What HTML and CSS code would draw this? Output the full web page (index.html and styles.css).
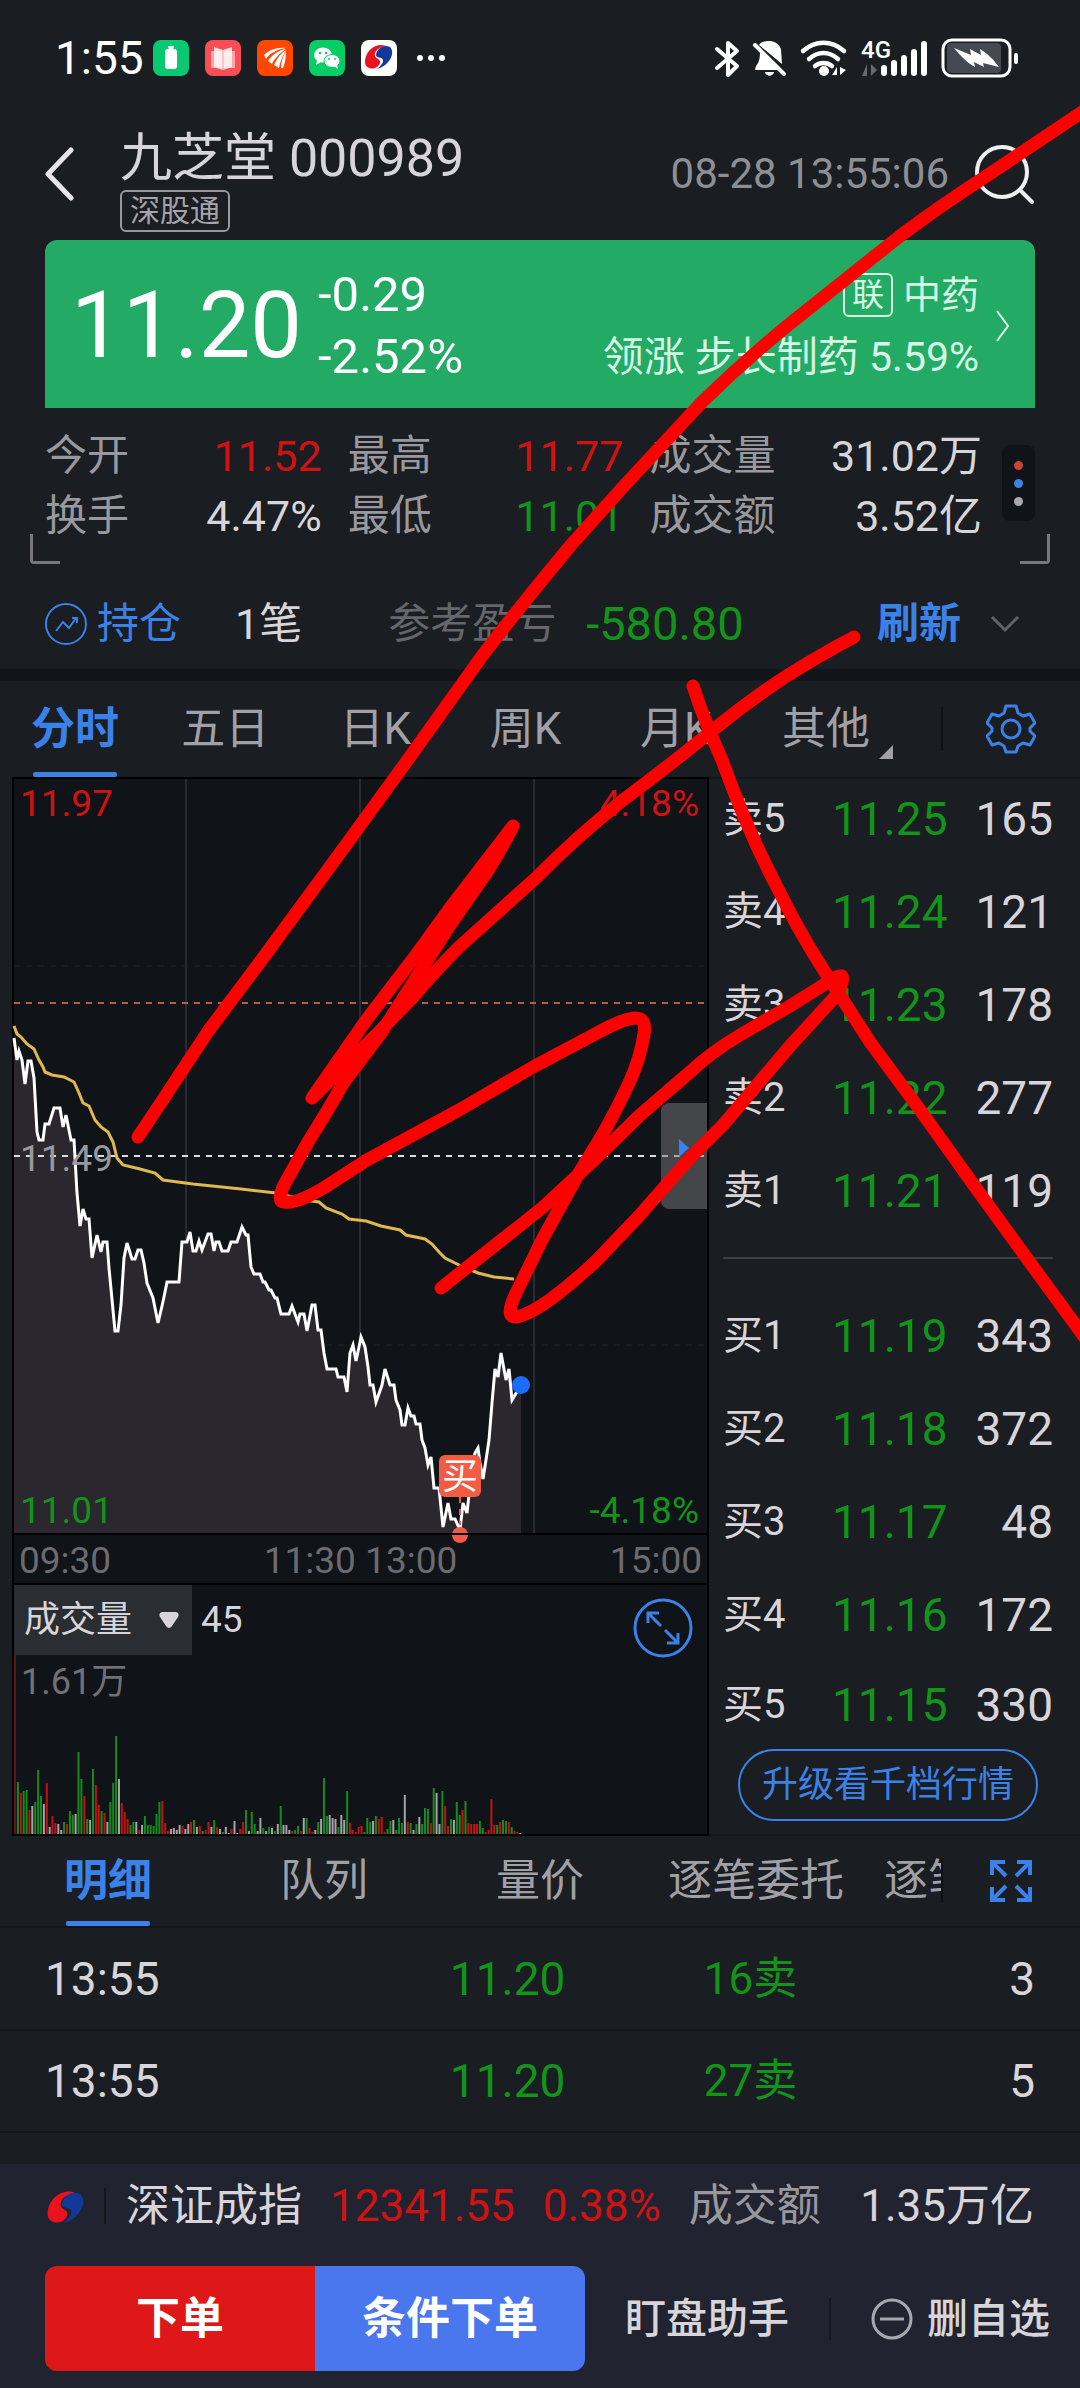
FILE: index.html
```html
<!DOCTYPE html>
<html lang="zh-CN">
<head>
<meta charset="utf-8">
<meta name="viewport" content="width=device-width, initial-scale=1">
<title>九芝堂 000989</title>
<link rel="stylesheet" href="styles.css">
</head>
<body>
<div class="app">
  <div class="status">
    <span class="clock">1:55</span>
    <div class="notices">
      <svg width="36" height="36" viewBox="0 0 36 36"><rect width="36" height="36" rx="8" fill="#08c972"/><rect x="12" y="9" width="12" height="20" rx="3" fill="#fff"/><path d="M15 6h6l-1 4h-4z" fill="#fff"/></svg>
      <svg width="36" height="36" viewBox="0 0 36 36"><rect width="36" height="36" rx="8" fill="#f94f54"/><path d="M6 11h24v17H6z" fill="#fda5a8"/><path d="M9 7l9 3 9-3v20l-9 3-9-3z" fill="#fff" opacity=".8"/><path d="M18 10v20" stroke="#f9a0a3"/></svg>
      <svg width="36" height="36" viewBox="0 0 36 36"><rect width="36" height="36" rx="8" fill="#ff4700"/><path d="M7 15C12 10 20 7 29 8 18 10 12 14 9 19zM11 21c4-6 10-11 18-12-7 5-11 9-14 15zM17 25c3-7 7-12 12-15-4 7-6 12-7 18zM24 28c0-6 2-12 5-17 0 7-1 12-3 17z" fill="#fff"/></svg>
      <svg width="36" height="36" viewBox="0 0 36 36"><rect width="36" height="36" rx="8" fill="#07cd65"/><ellipse cx="14" cy="15" rx="9" ry="7.500" fill="#fff"/><path d="M8 20l-1 5 5-3z" fill="#fff"/><ellipse cx="23" cy="21" rx="8" ry="6.500" fill="#fff" stroke="#07cd65"/><path d="M25 26l4 3-1-5z" fill="#fff"/><g fill="#07cd65"><circle cx="11" cy="13" r="1.200"/><circle cx="17" cy="13" r="1.200"/><circle cx="20" cy="19" r="1"/><circle cx="26" cy="19" r="1"/></g></svg>
      <svg width="36" height="36" viewBox="0 0 36 36"><rect width="36" height="36" rx="8" fill="#fff"/><use href="#citic"/></svg>
    </div>
    <span class="more"><i></i><i></i><i></i></span>
    <svg class="radios" width="306" height="44" viewBox="0 0 306 44" fill="none">
      <path d="M4 13l20 17-9 9V7l9 8L4 32" stroke="#fff" stroke-width="4" stroke-linejoin="round" stroke-linecap="round"/>
      <path d="M46 9c4-6 19-6 22 4l1 15zM43 30c4-4 4-11 4-15l18 19H42zM52 36h9c-1 5-8 5-9 0z" fill="#fff"/><path d="M42 9l29 29" stroke="#fff" stroke-width="4" stroke-linecap="round"/>
      <g stroke="#fff" stroke-width="4.500" stroke-linecap="round"><path d="M90 15c12-11 29-11 41 0M96 23c9-8 20-8 29 0M102 30c5-4 12-4 17 0"/></g><circle cx="111" cy="35" r="5" fill="#fff"/><path d="M124 31v8h-5zM127 31v8l6-5z" fill="#fff"/>
      <path d="M154 28v12h-5zM158 28v12l6-6z" fill="#666b70"/>
      <g stroke="#fff" stroke-width="6" stroke-linecap="round"><path d="M171 32v5M181 27v10M191 22v15M201 16v21M211 8v29"/></g>
      <rect x="230" y="4" width="67" height="36" rx="9" stroke="#fff" stroke-width="3"/><rect x="234" y="7" width="54" height="30" rx="4" fill="#454a52"/><path d="M241 12l17 7-1-6 11 6-1-6c8 5 13 10 19 18l-16-4 1 4-10-5 1 5c-9-5-15-12-21-19z" fill="#fff"/><rect x="301" y="17" width="4" height="11" rx="2" fill="#fff"/>
      <text x="148" y="22" class="network">4G</text>
    </svg>
  </div>

  <header class="header">
    <button class="icon-btn" aria-label="返回"><svg width="30" height="56" viewBox="0 0 30 56"><path d="M27 4L4 28l23 24" fill="none" stroke="#e8e5ea" stroke-width="5" stroke-linecap="round" stroke-linejoin="round"/></svg></button>
    <div class="title">
      <h1>九芝堂 000989</h1>
      <span class="badge">深股通</span>
    </div>
    <time class="stamp">08-28 13:55:06</time>
    <button class="icon-btn" aria-label="搜索"><svg width="62" height="62" viewBox="0 0 62 62" fill="none" stroke="#f0f0f2" stroke-width="4" stroke-linecap="round"><circle cx="29" cy="29" r="25"/><path d="M47 47l12 12"/></svg></button>
  </header>

  <section class="quote">
    <strong class="price">11.20</strong>
    <div class="change"><span>-0.29</span><span>-2.52%</span></div>
    <a class="sector" href="#sector">
      <span class="sector-name"><b>联</b>中药</span>
      <span>领涨 步长制药 5.59%</span>
    </a>
    <svg width="16" height="34" viewBox="0 0 16 34"><path d="M2 2l11 15L2 32" fill="none" stroke="#e4f8ec" stroke-width="2"/></svg>
  </section>

  <section class="stats">
    <dl>
      <div><dt>今开</dt><dd class="up">11.52</dd></div>
      <div><dt>最高</dt><dd class="up">11.77</dd></div>
      <div><dt>成交量</dt><dd>31.02万</dd></div>
      <div><dt>换手</dt><dd>4.47%</dd></div>
      <div><dt>最低</dt><dd class="down">11.01</dd></div>
      <div><dt>成交额</dt><dd>3.52亿</dd></div>
    </dl>
    <button class="dots" aria-label="更多指标"><i></i><i></i><i></i></button>
  </section>

  <section class="holding">
    <svg width="42" height="42" viewBox="0 0 42 42" fill="none" stroke="#3a82e8" stroke-width="2"><circle cx="21" cy="21" r="20"/><path d="M11 28l7-9 6 6 7-10M27 15h5v5" stroke-width="2"/></svg>
    <span class="hold-name">持仓</span>
    <span class="hold-count">1笔</span>
    <span class="hold-label">参考盈亏</span>
    <span class="hold-value">-580.80</span>
    <button class="refresh">刷新</button>
    <button class="icon-btn" aria-label="展开"><svg width="30" height="18" viewBox="0 0 30 18"><path d="M2 2l13 13L28 2" fill="none" stroke="#606468" stroke-width="3"/></svg></button>
  </section>

  <nav class="tabs">
    <div class="tab-list">
      <button class="tab active">分时</button>
      <button class="tab">五日</button>
      <button class="tab">日K</button>
      <button class="tab">周K</button>
      <button class="tab">月K</button>
      <button class="tab other">其他</button>
    </div>
    <button class="tool" aria-label="设置"><svg width="50" height="50" viewBox="0 0 50 50" fill="none" stroke="#3a82e8" stroke-width="3" stroke-linejoin="round"><path d="M20 2h10l2 7 5 3 7-2 5 9-5 5v3l5 5-5 9-7-2-5 3-2 6H20l-2-6-5-3-7 2-5-9 5-5v-3l-5-5 5-9 7 2 5-3z"/><circle cx="25" cy="25" r="9"/></svg></button>
  </nav>

  <main class="market">
    <div class="charts">
      <div class="chart">
        <svg class="plot" viewBox="0 0 693 754" fill="none">
          <path d="M172 0v754M346 0v754M520 0v754" stroke="#292c33" stroke-width="2"/>
          <path d="M0 187h693M0 566h693" stroke="#20262a" stroke-dasharray="6 6"/>
          <path class="area" fill="#2a272f" d=""/>
          <path d="M0 224h693" stroke="#b85b4c" stroke-width="2" stroke-dasharray="6 6"/>
          <path d="M0 377h693" stroke="#dcdcdc" stroke-width="2" stroke-dasharray="6 6"/>
          <polyline points="0,247 3,255 7,258 13,265 20,270 25,281 29,288 31,293 38,296 50,298 60,303 65,314 69,324 75,327 81,341 87,348 94,353 99,363 103,379 109,386 126,390 141,394 149,401 179,405 227,410 262,414 291,421 305,423 312,429 328,435 335,440 352,442 367,447 386,451 392,456 411,460 418,465 425,473 431,479 447,487 464,494 480,498 500,500" stroke="#dfb850" stroke-width="3"/>
          <polyline class="line" stroke="#fff" stroke-width="3" points="0,259 3,281 5,272 8,281 11,305 14,282 17,282 20,299 23,353 25,361 29,361 31,345 35,345 40,329 46,329 49,348 52,336 54,346 57,361 60,361 63,414 66,447 69,430 72,440 75,440 78,479 83,456 87,473 89,463 93,463 95,489 101,552 104,552 107,526 110,479 113,464 118,480 121,480 124,471 127,471 130,484 133,504 139,519 144,544 148,527 150,518 153,503 165,503 168,463 173,463 176,453 179,472 182,472 185,462 188,471 194,455 197,455 200,472 202,463 205,463 208,472 214,472 217,463 223,463 228,448 232,456 234,456 237,488 240,495 246,495 249,503 251,503 255,511 257,511 261,519 263,519 267,535 275,535 278,527 284,543 286,535 290,535 293,552 298,526 301,526 304,551 307,551 310,574 313,590 322,590 324,598 330,598 333,613 336,574 339,566 342,582 345,568 347,558 351,568 354,588 356,606 359,606 362,623 368,606 371,590 376,606 380,606 382,621 386,631 388,646 391,646 394,629 397,637 400,637 402,645 406,645 408,661 411,669 414,686 417,678 420,709 425,709 429,748 434,724 437,740 441,740 446,751 449,724 453,734 458,688 461,674 464,669 466,684 469,700 472,681 475,661 478,624 481,590 484,598 487,574 492,601 495,590 498,621 507,606"/>
          <circle cx="507" cy="606" r="9" fill="#1a6dff"/>
          <path d="M446 718v28" stroke="#ef5b48" stroke-width="2" stroke-dasharray="6 6"/>
          <circle cx="446" cy="756" r="8" fill="#ef5b48"/>
          <path d="M436 755h20" stroke="#000" stroke-width="2"/>
          <rect x="425" y="676" width="42" height="42" rx="6" fill="#f45b45"/>
          <text x="446" y="710" class="buy-mark">买</text>
        </svg>
        <span class="tag top left up">11.97</span>
        <span class="tag top right up">4.18%</span>
        <span class="tag mid left">11.49</span>
        <span class="tag bottom left down">11.01</span>
        <span class="tag bottom right down">-4.18%</span>
        <button class="handle" aria-label="收起盘口"><svg width="10" height="18" viewBox="0 0 10 18"><path d="M0 0l10 9-10 9z" fill="#3a82f0"/></svg></button>
      </div>
      <div class="times"><span>09:30</span><span>11:30 13:00</span><span>15:00</span></div>
      <div class="volume">
        <div class="volume-head">
          <label class="picker"><select aria-label="指标"><option>成交量</option></select><svg width="20" height="16" viewBox="0 0 20 16"><path d="M3 0h14q4 1 2 5l-6 9q-3 4-6 0L1 5q-2-4 2-5z" fill="#d8d5da"/></svg></label>
          <span>45</span>
        </div>
        <span class="volume-max">1.61万</span>
        <svg class="bars" viewBox="0 0 693 249" fill="none" stroke-width="2"></svg>
        <button class="zoom" aria-label="放大"><svg width="60" height="60" viewBox="0 0 60 60" fill="none" stroke="#3a82e8" stroke-width="3"><circle cx="30" cy="30" r="28"/><path d="M15 25V15h11M15 15l13 13M45 35v10H34M45 45L32 32"/></svg></button>
      </div>
    </div>

    <aside class="book">
      <table class="asks">
        <tr><th>卖5</th><td class="down">11.25</td><td>165</td></tr>
        <tr><th>卖4</th><td class="down">11.24</td><td>121</td></tr>
        <tr><th>卖3</th><td class="down">11.23</td><td>178</td></tr>
        <tr><th>卖2</th><td class="down">11.22</td><td>277</td></tr>
        <tr><th>卖1</th><td class="down">11.21</td><td>119</td></tr>
      </table>
      <hr>
      <table class="bids">
        <tr><th>买1</th><td class="down">11.19</td><td>343</td></tr>
        <tr><th>买2</th><td class="down">11.18</td><td>372</td></tr>
        <tr><th>买3</th><td class="down">11.17</td><td>48</td></tr>
        <tr><th>买4</th><td class="down">11.16</td><td>172</td></tr>
        <tr><th>买5</th><td class="down">11.15</td><td>330</td></tr>
      </table>
      <button class="upgrade">升级看千档行情</button>
    </aside>
  </main>

  <nav class="tabs detail-tabs">
    <div class="tab-list">
      <button class="tab active">明细</button>
      <button class="tab">队列</button>
      <button class="tab">量价</button>
      <button class="tab">逐笔委托</button>
      <button class="tab">逐笔</button>
    </div>
    <button class="tool" aria-label="全屏"><svg width="44" height="44" viewBox="0 0 44 44" fill="none" stroke="#3a82e8" stroke-width="4"><path d="M3 16V3h13M3 3l14 14M28 3h13v13M41 3L27 17M3 28v13h13M3 41l14-14M41 28v13H28M41 41L27 27"/></svg></button>
  </nav>

  <table class="trades">
    <tr><td>13:55</td><td class="down">11.20</td><td class="down">16卖</td><td>3</td></tr>
    <tr><td>13:55</td><td class="down">11.20</td><td class="down">27卖</td><td>5</td></tr>
  </table>

  <footer class="footer">
    <div class="index">
      <svg width="42" height="42" viewBox="2 0 32 32"><g id="citic"><path d="M25 6C16 2 4 10 4 22c0 8 12 9 15 1 1-4-4-4-5-7C13 11 18 7 25 6z" fill="#e8131d"/><path d="M15 15c1-7 8-11 14-8 6 6-1 19-13 22 6-5 8-9 4-11-3-1-5-1-5-3z" fill="#12399a"/></g></svg>
      <span class="rule"></span>
      <span class="index-name">深证成指</span>
      <span class="up">12341.55</span>
      <span class="up">0.38%</span>
      <span class="muted">成交额</span>
      <span>1.35万亿</span>
    </div>
    <div class="actions">
      <div class="orders">
        <button class="order">下单</button>
        <button class="order condition">条件下单</button>
      </div>
      <button class="plain">盯盘助手</button>
      <span class="rule"></span>
      <button class="plain"><svg width="42" height="42" viewBox="0 0 42 42" fill="none" stroke="#a8a8ae" stroke-width="3"><circle cx="21" cy="21" r="19"/><path d="M9 21h24"/></svg>删自选</button>
    </div>
  </footer>

  <svg class="ink" viewBox="0 0 1080 2388" fill="none" aria-hidden="true">
    <path d="M138 1137L166 1095Q185 1066 209 1030L260 962L340 853L404 765L482 656Q525 600 571 545L623 487L702 402Q745 360 792 322L900 236Q940 206 985 177L1085 110"/>
    <path d="M854 637Q820 655 785 677Q750 700 713 730Q670 765 623 800Q575 838 537 877L459 947Q438 968 413 997L376 1035L312 1098L367 1019L413 959L450 908L513 826Q500 852 487 872L450 925L418 975L381 1033L344 1082Q325 1115 308 1142L284 1185Q276 1203 285 1202Q297 1204 325 1187L367 1160L459 1110L533 1067L597 1033Q620 1020 634 1018Q647 1017 644 1034Q640 1060 629 1083Q615 1113 601 1137L579 1173L542 1240L520 1285Q502 1319 517 1317Q530 1314 551 1299Q575 1281 597 1260L638 1217L690 1158L723 1125L790 1046L833 999Q845 984 842 976Q838 974 825 984L790 1006L740 1035Q710 1053 690 1072L640 1115L592 1162L542 1208L441 1288"/>
    <path d="M693 686Q704 720 722 760Q748 832 777 887Q798 930 823 969L870 1042L923 1114L973 1184L1023 1253L1088 1342"/>
  </svg>
</div>
<script src="chart.js"></script>
</body>
</html>
```
FILE: styles.css
```css
* { box-sizing: border-box; }

body {
  margin: 0;
  background: #1a1d21;
  color: #d8d5da;
  font: 42px/60px Roboto, "Noto Sans CJK SC", sans-serif;
}

button, select {
  margin: 0;
  padding: 0;
  border: 0;
  background: none;
  color: inherit;
  font: inherit;
  appearance: none;
}

svg { display: block; flex: none; }
h1, dl, dd { margin: 0; font-weight: 400; }
table { width: 100%; border-collapse: collapse; table-layout: fixed; }
td, th { padding: 0; font-weight: 400; }

.app { position: relative; overflow: hidden; }
.up { color: #cf1212; }
.down { color: #12931a; }
.muted { color: #98989e; }

/* system bar */
.status {
  display: flex;
  align-items: center;
  height: 116px;
  padding: 0 61px 0 55px;
}
.clock { width: 98px; color: #fff; font-size: 46px; }
.notices { display: flex; gap: 16px; }
.more { display: flex; gap: 5px; margin: 0 auto 0 20px; }
.more i { width: 6px; height: 6px; border-radius: 50%; background: #fff; }
.network { fill: #fff; font-size: 24px; font-weight: 500; }

/* title bar */
.header {
  display: flex;
  align-items: center;
  height: 124px;
  padding: 0 45px 8px 44px;
}
.icon-btn { flex: none; }
.title { margin: 12px auto 0 46px; }
.title h1 { font-size: 52px; line-height: 60px; white-space: nowrap; }
.badge {
  display: block;
  width: max-content;
  margin-top: 1px;
  padding: 0 8px;
  border: 2px solid #98989e;
  border-radius: 6px;
  color: #a4a4aa;
  font-size: 30px;
  line-height: 38px;
}
.stamp { margin-right: 24px; color: #8d8f95; font-size: 42px; white-space: nowrap; }

/* last price */
.quote {
  display: flex;
  align-items: center;
  height: 168px;
  margin: 0 45px;
  padding: 4px 24px 0 26px;
  border-radius: 12px 12px 0 0;
  background: #23ab66;
  color: #fff;
}
.price { font-size: 92px; line-height: 104px; font-weight: 400; }
.change { display: grid; margin-left: 16px; font-size: 49px; line-height: 62px; }
.sector {
  display: grid;
  justify-items: end;
  margin: 0 16px 0 auto;
  color: #d5f7e3;
  font-size: 41px;
  line-height: 62px;
  text-decoration: none;
  white-space: nowrap;
}
.sector-name { display: flex; align-items: center; gap: 10px; font-size: 38px; }
.sector-name b {
  padding: 0 7px;
  border: 2px solid;
  border-radius: 6px;
  font-size: 32px;
  line-height: 40px;
  font-weight: 400;
}

.stats {
  position: relative;
  display: flex;
  align-items: flex-start;
  gap: 20px;
  height: 171px;
  padding: 18px 45px 0;
}
.stats dl {
  flex: 1;
  display: grid;
  grid-template-columns: 277fr 276fr 333fr;
  column-gap: 26px;
}
.stats dl div { display: flex; justify-content: space-between; white-space: nowrap; }
.stats dt { color: #98989e; }
.stats dd { font-size: 43px; }
.stats::before, .stats::after {
  content: "";
  position: absolute;
  bottom: 15px;
  width: 27px;
  height: 27px;
  border: solid #77777c;
}
.stats::before { left: 30px; border-width: 0 0 3px 3px; border-radius: 0 0 0 4px; }
.stats::after { right: 30px; border-width: 0 3px 3px 0; border-radius: 0 0 4px 0; }
.dots {
  display: flex;
  flex-direction: column;
  align-items: center;
  justify-content: center;
  gap: 9px;
  width: 33px;
  height: 76px;
  margin-top: 19px;
  border-radius: 8px;
  background: #101317;
}
.dots i { width: 9px; height: 9px; border-radius: 50%; background: #aaa8ae; }
.dots i:nth-child(1) { background: #c8452f; }
.dots i:nth-child(2) { background: #3a82e8; }

.holding {
  display: flex;
  align-items: center;
  height: 102px;
  padding: 0 60px 0 45px;
  border-bottom: 12px solid #111418;
  white-space: nowrap;
}
.hold-name { margin-left: 10px; color: #3a82e8; }
.hold-count { margin-left: 54px; font-size: 43px; }
.hold-label { margin-left: 86px; color: #66666c; }
.hold-value { margin-left: 30px; color: #12931a; font-size: 47px; }
.refresh { margin: 0 29px 0 auto; color: #3a82e8; font-weight: 700; }

/* tab strips */
.tabs { display: flex; height: 96px; font-size: 44px; }
.tab-list { display: flex; flex: 1; overflow: hidden; }
.tab {
  position: relative;
  flex: 1;
  color: #a0a0a6;
  white-space: nowrap;
}
.active { color: #3a82e8; font-weight: 700; }
.active::after {
  content: "";
  position: absolute;
  bottom: 0;
  left: calc(50% - 42px);
  width: 84px;
  height: 5px;
  border-radius: 2px;
  background: #3a82e8;
}
.other::after {
  content: "";
  position: absolute;
  right: 8px;
  bottom: 18px;
  border: solid transparent;
  border-width: 14px 0 0 14px;
  border-bottom: 14px solid #a0a0a6;
  border-top: 0;
}
.tool {
  display: grid;
  place-items: center;
  width: 139px;
  background: linear-gradient(#0f1215, #0f1215) 0 50% / 2px 44px no-repeat;
}
.tabs:not(.detail-tabs) .tab-list { padding-right: 40px; }
.detail-tabs { height: 92px; border-bottom: 2px solid #121519; }
.detail-tabs .tab { flex: 0 0 216px; }
.detail-tabs .tab:last-child { flex-basis: 128px; }

/* charts and order book */
.market {
  display: grid;
  grid-template-columns: 697fr 371fr;
  padding-left: 12px;
}
.charts { background: #101317; font-size: 37px; }
.chart { position: relative; border: 2px solid #000; }
.plot, .bars { width: 100%; height: auto; overflow: visible; }
.buy-mark { fill: #fff; font-size: 36px; text-anchor: middle; }
.tag { position: absolute; line-height: 44px; }
.top { top: 3px; }
.mid { top: 358px; color: #98989e; }
.bottom { bottom: 0; }
.left { left: 6px; }
.right { right: 8px; }
.handle {
  position: absolute;
  top: 324px;
  right: 0;
  display: grid;
  place-items: center;
  width: 46px;
  height: 106px;
  padding-bottom: 16px;
  border-radius: 8px 0 0 8px;
  background: rgb(120 122 126 / 50%);
}
.times {
  display: flex;
  justify-content: space-between;
  height: 48px;
  padding: 0 5px;
  border: solid #000;
  border-width: 0 2px;
  color: #6b6b70;
  line-height: 52px;
}
.volume { position: relative; border: 2px solid #000; }
.volume-head {
  position: absolute;
  display: flex;
  align-items: center;
  gap: 9px;
}
.picker {
  display: flex;
  align-items: center;
  gap: 26px;
  width: 178px;
  height: 70px;
  padding-left: 10px;
  background: #2a2d31;
  font-size: 36px;
}
.volume-max { position: absolute; top: 71px; left: 7px; color: #707075; font-size: 36px; line-height: 52px; }
.zoom { position: absolute; top: 13px; right: 14px; }

.book {
  padding: 0 27px 0 14px;
  border: solid #121519;
  border-width: 2px 0;
  font-size: 46px;
}
.book tr { height: 93px; }
.book th { width: 109px; font-size: 40px; text-align: left; }
.book td:last-child { width: 104px; text-align: right; }
.asks tr:first-child { height: 86px; }
.asks tr:first-child > * { padding-bottom: 7px; }
.bids tr:last-child { height: 87px; }
.book hr { height: 2px; margin: 20px 0 30px; border: 0; background: #3d404c; }
.upgrade {
  display: block;
  width: 300px;
  height: 72px;
  margin: 1px auto 0;
  border: 2px solid #3a82e8;
  border-radius: 36px;
  color: #3a82e8;
  font-size: 36px;
  line-height: 68px;
}

.trades { margin-bottom: 31px; font-size: 46px; }
.trades tr { height: 102px; border-bottom: 2px solid #121519; }
.trades td:nth-child(1) { width: 35%; padding-left: 45px; }
.trades td:nth-child(2) { width: 24%; text-align: center; }
.trades td:nth-child(3) { width: 21%; font-size: 44px; text-align: center; }
.trades td:nth-child(4) { padding-right: 45px; text-align: right; }

/* bottom bar */
.footer { padding: 12px 30px 18px 45px; background: #212430; font-size: 44px; white-space: nowrap; }
.index { display: flex; align-items: center; height: 60px; padding-right: 16px; margin-bottom: 30px; }
.index .up { margin-right: 28px; }
.index .muted { margin-right: auto; }
.rule { flex: none; width: 2px; height: 42px; background: #15171e; }
.index .rule { height: 36px; margin: 0 20px 0 17px; }
.index-name { margin-right: 28px; }
.actions { display: flex; align-items: center; justify-content: space-between; }
.orders { display: flex; }
.order {
  width: 270px;
  height: 105px;
  border-radius: 12px 0 0 12px;
  background: #de1818;
  color: #fff;
  font-weight: 700;
}
.condition { border-radius: 0 12px 12px 0; background: #4a76ee; }
.plain { display: flex; align-items: center; gap: 14px; font-size: 41px; font-weight: 500; }

/* handwriting over the page */
.ink {
  position: absolute;
  top: 0;
  left: 0;
  width: 100%;
  pointer-events: none;
  stroke: #f00;
  stroke-width: 13px;
  stroke-linecap: round;
  stroke-linejoin: round;
}
```
FILE: chart.js
```js
// Fill under the price line.
const line = document.querySelector('.line').getAttribute('points');
document.querySelector('.area').setAttribute('d', 'M' + line + ' 507,754 0,754z');

// One bar a minute: o = opening, g = falling, r = rising, w = unchanged, then the height.
const minutes = ('o179 g52 r41 g43 g44 r24 w28 g32 g64 g38 w30 r51 w7 r18 r11 w10 w4 g12 r10 g23 g19 w20 g82 g55 r38 ' +
  'g15 w14 g65 r49 r29 g23 r21 w12 g32 g51 g98 w55 r31 r22 r15 g9 g12 w12 r4 w9 g18 g9 g9 g8 g20 g32 r33 r11 r3 w5 w6 ' +
  'w4 w9 r8 w5 w10 r12 g14 w7 r8 g3 r4 r12 w7 g14 r7 w5 g2 w7 w1 r5 w13 w1 r5 r12 g24 w3 g22 g10 w3 w16 g6 w3 g7 w6 ' +
  'g3 w10 g28 w9 w9 w4 r3 g4 g8 r3 w16 g16 r6 r2 w4 g12 w15 g56 g18 w19 w16 w15 g7 w19 w14 g43 r11 r4 r2 r7 r8 g2 g16 ' +
  'g12 w13 g18 r15 r17 r2 g5 g13 w14 g4 g16 g11 w39 r12 g11 w4 g10 w17 g10 g26 g25 r11 g46 w41 w10 g43 r28 r8 g15 w14 ' +
  'g32 g19 r24 g33 r11 r10 r10 r10 g13 g6 r2 r4 r35 r9 g9 r12 g14 g13 r12 g7 r3 r2 w1').split(' ');
const colours = { o: '#5e1518', g: '#178a1d', r: '#c01414', w: '#a5a3a8' };
const step = 693 / 240;
const bars = document.querySelector('.bars');
for (const key of Object.keys(colours)) {
  const path = document.createElementNS('http://www.w3.org/2000/svg', 'path');
  const d = minutes
    .map((m, i) => (m[0] === key ? `M${(i * step + 1).toFixed(1)} 249v-${m.slice(1)}` : ''))
    .join('');
  path.setAttribute('d', d);
  path.setAttribute('stroke', colours[key]);
  bars.append(path);
}
```
